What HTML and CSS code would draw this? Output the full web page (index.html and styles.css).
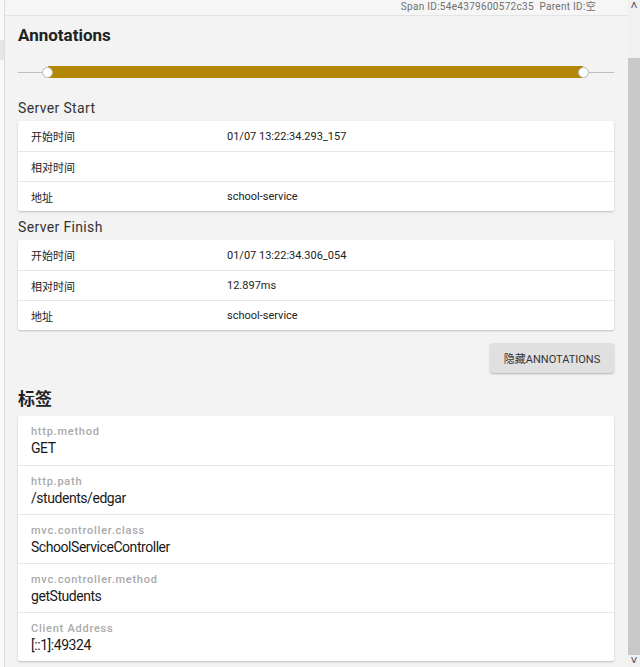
FILE: index.html
```html
<!DOCTYPE html>
<html lang="zh">
<head>
<meta charset="utf-8">
<title>Span</title>
<link rel="stylesheet" href="styles.css">
</head>
<body>
<div class="page">
  <div class="edge"><div class="edge-block"></div></div>
  <main class="panel">
    <div class="topbar">Span ID:54e4379600572c35&nbsp;&nbsp;Parent ID:空</div>
    <div class="content">
      <h2 class="title">Annotations</h2>
      <div class="slider">
        <div class="track-line"></div>
        <span class="knob"></span>
        <div class="bar"></div>
        <span class="knob"></span>
        <div class="track-line"></div>
      </div>

      <h3 class="sub">Server Start</h3>
      <div class="card">
        <div class="row"><span class="lbl">开始时间</span><span class="val">01/07 13:22:34.293_157</span></div>
        <div class="row"><span class="lbl">相对时间</span><span class="val"></span></div>
        <div class="row"><span class="lbl">地址</span><span class="val">school-service</span></div>
      </div>

      <h3 class="sub sub-2">Server Finish</h3>
      <div class="card">
        <div class="row"><span class="lbl">开始时间</span><span class="val">01/07 13:22:34.306_054</span></div>
        <div class="row"><span class="lbl">相对时间</span><span class="val">12.897ms</span></div>
        <div class="row"><span class="lbl">地址</span><span class="val">school-service</span></div>
      </div>

      <div class="actions"><button class="btn">隐藏ANNOTATIONS</button></div>

      <h2 class="title tags-title">标签</h2>
      <div class="card tags">
        <div class="tag"><div class="key">http.method</div><div class="value">GET</div></div>
        <div class="tag"><div class="key">http.path</div><div class="value">/students/edgar</div></div>
        <div class="tag"><div class="key">mvc.controller.class</div><div class="value">SchoolServiceController</div></div>
        <div class="tag"><div class="key">mvc.controller.method</div><div class="value">getStudents</div></div>
        <div class="tag"><div class="key">Client Address</div><div class="value">[::1]:49324</div></div>
      </div>
    </div>
  </main>
  <div class="scrollbar">
    <div class="arrow">&#x2C4;</div>
    <div class="sb-gap"></div>
    <div class="thumb"></div>
    <div class="arrow">&#x2C5;</div>
  </div>
</div>
</body>
</html>
```
FILE: styles.css
```css
html, body {
  margin: 0;
  padding: 0;
}
body {
  font-family: Roboto, "Liberation Sans", "Noto Sans CJK SC", sans-serif;
  color: #222;
  background: #fafafa;
}
.page {
  display: flex;
  height: 667px;
  overflow: hidden;
}
.edge {
  width: 4px;
  background: #f8f8f8;
  border-right: 1px solid #dcdcdc;
  flex: none;
}
.edge-block {
  margin-top: 40px;
  height: 20px;
  background: #e6e6e6;
}
.panel {
  flex: 1;
  background: #f3f3f3;
  min-width: 0;
}
.topbar {
  height: 15px;
  line-height: 14px;
  border-bottom: 1px solid #e4e4e4;
  background: #f6f6f6;
  font-size: 10px;
  letter-spacing: 0.3px;
  color: #707070;
  text-align: right;
  padding-right: 32px;
}
.content {
  padding: 0 14px 0 13px;
}
.title {
  margin: 9px 0 0;
  font-family: Roboto, "Liberation Sans", "Noto Sans CJK SC", sans-serif;
  font-size: 17px;
  line-height: 20px;
  font-weight: bold;
  color: #222;
}
.slider {
  margin-top: 21px;
  height: 12px;
  display: flex;
  align-items: center;
}
.track-line {
  width: 24px;
  height: 1px;
  background: #bdbdbd;
}
.track-line:last-child {
  width: 25px;
}
.knob {
  width: 9px;
  height: 9px;
  border-radius: 50%;
  background: #fff;
  border: 1px solid #b5b5b5;
  flex: none;
  position: relative;
  z-index: 1;
}
.bar {
  flex: 1;
  height: 12px;
  background: #b38604;
  margin: 0 -5px;
}
.sub {
  margin: 22px 0 0;
  font-size: 14px;
  line-height: 16px;
  font-weight: normal;
  letter-spacing: 0.35px;
  color: #333;
}
.sub-2 {
  margin-top: 8px;
}
.card {
  margin-top: 5px;
  background: #fff;
  border-radius: 2px;
  box-shadow: 0 1px 2px rgba(0, 0, 0, 0.22);
}
.row {
  display: grid;
  grid-template-columns: 196px 1fr;
  height: 30px;
  align-items: center;
  padding-left: 13px;
  font-size: 11px;
  color: #222;
  border-top: 1px solid #e6e6e6;
  box-sizing: border-box;
}
.row:first-child {
  border-top: none;
}
.actions {
  display: flex;
  justify-content: flex-end;
  margin-top: 13px;
}
.btn {
  width: 124px;
  height: 30px;
  border: none;
  border-radius: 3px;
  background: #e0e0e0;
  box-shadow: 0 1px 2px rgba(0, 0, 0, 0.25);
  font-family: Roboto, "Liberation Sans", "Noto Sans CJK SC", sans-serif;
  font-size: 11px;
  color: #333;
  padding: 0;
}
.tags-title {
  margin-top: 16px;
}
.tags {
  margin-top: 7px;
}
.tag {
  height: 49px;
  box-sizing: border-box;
  padding: 9px 13px 0;
  border-top: 1px solid #e6e6e6;
}
.tag:first-child {
  border-top: none;
}
.key {
  font-size: 11px;
  line-height: 14px;
  color: #aaa;
  font-weight: 500;
  letter-spacing: 0.75px;
}
.value {
  font-size: 14px;
  line-height: 18px;
  letter-spacing: -0.45px;
  color: #1a1a1a;
}
.scrollbar {
  width: 12px;
  flex: none;
  background: #f1f1f1;
  display: flex;
  flex-direction: column;
}
.arrow {
  height: 12px;
  font-size: 12px;
  line-height: 12px;
  text-align: center;
  color: #505050;
}
.sb-gap {
  height: 46px;
}
.thumb {
  flex: 1;
  background: #c9c9c9;
}
```
